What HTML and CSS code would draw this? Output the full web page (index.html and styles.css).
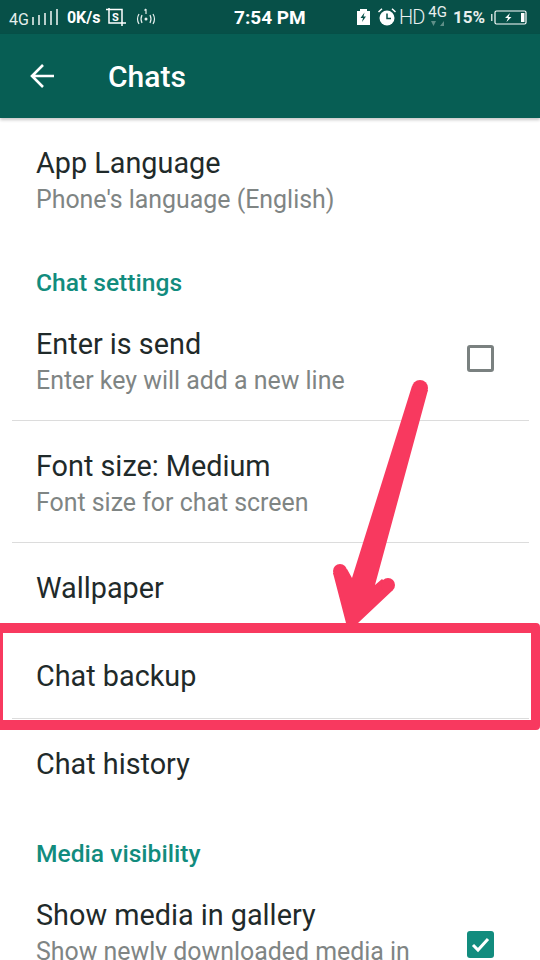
FILE: index.html
```html
<!DOCTYPE html>
<html lang="en">
<head>
  <meta charset="UTF-8">
  <meta name="viewport" content="width=device-width, initial-scale=1.0">
  <title>Chats</title>
  <link rel="stylesheet" href="styles.css">
</head>
<body>
  <div class="status-bar">
    <div class="status-left">
      <span class="net">4G</span>
      <svg class="signal" width="26" height="16" viewBox="0 0 26 16"><path d="M1 8v8M7 6v10M13 4v12M19 2v14M25 0v16" stroke="#e4eeec" stroke-width="1.6" fill="none"/></svg>
      <span class="speed">0K/s</span>
      <svg class="screenshot" width="20" height="18" viewBox="0 0 20 18"><path d="M0 1.5h3M3 0v15h14M3 1.5h13v13.500M16 15v3M17 15h3" stroke="#fff" stroke-width="1.500" fill="none"/><text x="6" y="12.500" class="s-glyph">S</text></svg>
      <svg class="hotspot" width="22" height="18" viewBox="0 0 22 18"><circle cx="11" cy="11" r="1.500" fill="#e4eeec"/><path d="M11 1v5M9.500 2.500L11 1" stroke="#e4eeec" stroke-width="1.200" fill="none"/><path d="M7 7q-2 4 0 8M4 6q-3 5 0 10M15 7q2 4 0 8M18 6q3 5 0 10" stroke="#e4eeec" stroke-width="1.200" fill="none"/></svg>
    </div>
    <div class="status-time">7:54 PM</div>
    <div class="status-right">
      <svg width="13" height="16" viewBox="0 0 13 16"><path d="M0 2h3V0h7v2h3v14H0z" fill="#fff"/><path d="M7.500 3.500L3.500 9h2.500l-1 4 4-5.500H6.500z" fill="#075048"/></svg>
      <svg class="alarm" width="18" height="18" viewBox="0 0 18 18"><circle cx="9" cy="10" r="7.500" fill="#fff"/><path d="M9 5.500V10.500H13" stroke="#075048" stroke-width="1.500" fill="none"/><path d="M0.500 4L4 0.800M17.500 4L14 0.800" stroke="#fff" stroke-width="1.500"/></svg>
      <span class="hd">HD</span>
      <span class="lte">
        4G
        <svg width="14" height="5" viewBox="0 0 14 5"><path d="M0 0h5L2.500 5zM9 5l4-5v5z" fill="#5f8f88"/></svg>
      </span>
      <span class="pct">15%</span>
      <svg class="battery" width="36" height="15" viewBox="0 0 36 15"><path d="M0.800 4v7" stroke="#fff" stroke-width="1.200"/><rect x="4" y="1" width="31" height="13" rx="1.500" fill="none" stroke="#fff" stroke-width="1.200"/><rect x="30" y="3" width="3.500" height="9" fill="#fff"/><path d="M19 3l-5 5h3l-1.500 4 5-5h-3z" fill="#fff"/></svg>
    </div>
  </div>

  <header class="app-bar">
    <svg class="back" width="24" height="24" viewBox="0 0 24 24"><path d="M24 12H2M13 1L2 12l11 11" stroke="#fff" stroke-width="2.600" fill="none"/></svg>
    <h1>Chats</h1>
  </header>

  <main class="settings">
    <div class="item first">
      <div class="title">App Language</div>
      <div class="sub">Phone's language (English)</div>
    </div>

    <div class="section">Chat settings</div>

    <div class="item with-control">
      <div>
        <div class="title">Enter is send</div>
        <div class="sub">Enter key will add a new line</div>
      </div>
      <span class="box"></span>
    </div>
    <div class="item">
      <div class="title">Font size: Medium</div>
      <div class="sub">Font size for chat screen</div>
    </div>
    <div class="item single">
      <div class="title">Wallpaper</div>
    </div>
    <div class="item single">
      <div class="title">Chat backup</div>
    </div>
    <div class="item single last">
      <div class="title">Chat history</div>
    </div>

    <div class="section">Media visibility</div>

    <div class="item with-control">
      <div>
        <div class="title">Show media in gallery</div>
        <div class="sub">Show newly downloaded media in</div>
      </div>
      <span class="box checked">
        <svg width="27" height="27" viewBox="0 0 27 27"><path d="M6 14l5 5L21 8" stroke="#fff" stroke-width="3" fill="none"/></svg>
      </span>
    </div>
  </main>

  <div class="highlight"></div>
  <svg class="arrow" width="120" height="260" viewBox="0 0 120 260" fill="#f8395f">
    <path d="M92 16L108 20L55 215L62 209L73 220L38 253H26L13 203L27 199L32 208z"/>
    <circle cx="100" cy="18" r="8"/>
    <circle cx="68" cy="215" r="7"/>
    <circle cx="20" cy="201" r="7"/>
  </svg>
</body>
</html>
```

FILE: styles.css
```css
body {
  margin: 0;
  width: 540px;
  height: 960px;
  overflow: hidden;
  position: relative;
  background: #fff;
  font-family: Roboto, "Liberation Sans", sans-serif;
  color: #1f2a2a;
}
.status-bar {
  height: 34px;
  box-sizing: border-box;
  background: #075048;
  color: #fff;
  display: flex;
  align-items: center;
  padding: 0 13px 0 9px;
}
.status-left, .status-right {
  display: flex;
  align-items: center;
}
.status-left {
  width: 225px;
}
.net {
  font-size: 16px;
  color: #e4eeec;
  margin-top: 4px;
}
.signal {
  margin-left: 3px;
}
.speed {
  font-size: 16px;
  font-weight: 700;
  margin-left: 9px;
}
.screenshot {
  margin-left: 6px;
}
.s-glyph {
  font-size: 11px;
  font-weight: 700;
  fill: #fff;
}
.hotspot {
  margin-left: 9px;
}
.status-time {
  font-size: 19px;
  font-weight: 700;
}
.status-right {
  margin-left: auto;
}
.alarm {
  margin-left: 8px;
}
.hd {
  font-size: 20px;
  font-weight: 300;
  color: #e8efee;
  margin-left: 3px;
  letter-spacing: -1px;
}
.lte {
  display: flex;
  flex-direction: column;
  align-items: center;
  font-size: 15px;
  line-height: 14px;
  color: #e8efee;
  margin: 0 0 3px 4px;
}
.lte svg {
  margin-top: 2px;
}
.pct {
  font-size: 17px;
  font-weight: 700;
  color: #e8efee;
  margin-left: 6px;
}
.battery {
  margin-left: 6px;
}
.app-bar {
  height: 84px;
  box-sizing: border-box;
  background: #075e54;
  display: flex;
  align-items: center;
  padding-left: 30px;
  box-shadow: 0 2px 3px rgba(0, 0, 0, 0.22);
  position: relative;
}
.app-bar h1 {
  margin: 0 0 0 54px;
  font-size: 30px;
  font-weight: 500;
  color: #fff;
}
.settings {
  padding: 0 11px 0 12px;
}
.item {
  height: 122px;
  box-sizing: border-box;
  padding: 27px 0 0 24px;
  border-bottom: 1px solid #dcdcdc;
}
.item.first {
  height: 140px;
  border-bottom: none;
}
.item.single {
  height: 88px;
}
.item.last {
  height: 110px;
  border-bottom: none;
}
.with-control {
  display: flex;
  justify-content: space-between;
}
.title {
  font-size: 28.800px;
  line-height: 36px;
  color: #1f2a2a;
}
.sub {
  font-size: 24.900px;
  line-height: 38px;
  color: #7f8584;
}
.section {
  height: 41px;
  padding: 9px 0 0 24px;
  box-sizing: border-box;
  font-size: 24.600px;
  line-height: 32px;
  font-weight: 500;
  color: #128c7e;
}
.box {
  width: 27px;
  height: 27px;
  box-sizing: border-box;
  border: 3px solid #7a8180;
  border-radius: 3px;
  margin: 19px 35px 0 0;
  flex: none;
}
.box.checked {
  border: none;
  background: #128c7e;
  margin-top: 34px;
}
.box svg {
  display: block;
}
.highlight {
  position: absolute;
  left: 0;
  top: 623px;
  width: 540px;
  height: 107px;
  box-sizing: border-box;
  border-style: solid;
  border-color: #f8395f;
  border-width: 10px 9px 10px 3px;
  border-radius: 0 4px 4px 0;
}
.arrow {
  position: absolute;
  left: 320px;
  top: 370px;
}
```
